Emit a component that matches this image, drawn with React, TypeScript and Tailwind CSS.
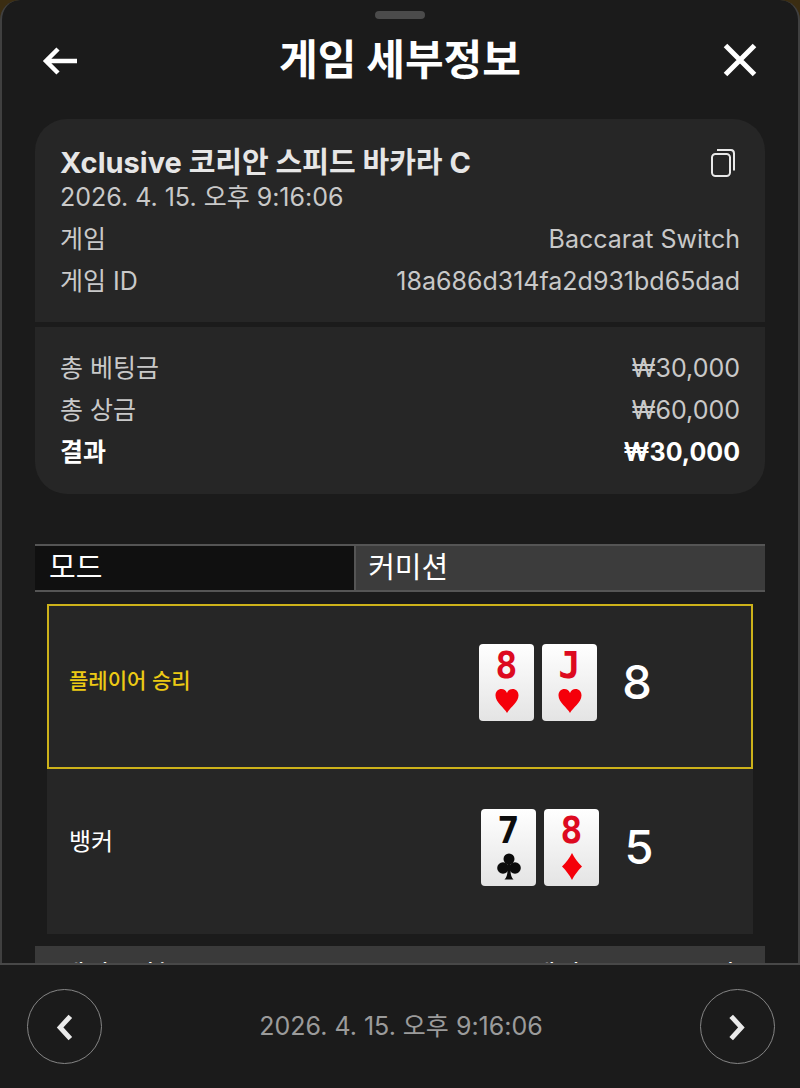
import type { ReactNode } from "react";

const summary = [
  { label: "게임", value: "Baccarat Switch" },
  { label: "게임 ID", value: "18a686d314fa2d931bd65dad" },
];

const totals = [
  { label: "총 베팅금", value: "₩30,000", strong: false },
  { label: "총 상금", value: "₩60,000", strong: false },
  { label: "결과", value: "₩30,000", strong: true },
];

type Suit = "heart" | "club" | "diamond";
type PlayingCard = { rank: string; suit: Suit };

const hands: { name: string; winner: boolean; score: number; cards: PlayingCard[] }[] = [
  {
    name: "플레이어 승리",
    winner: true,
    score: 8,
    cards: [
      { rank: "8", suit: "heart" },
      { rank: "J", suit: "heart" },
    ],
  },
  {
    name: "뱅커",
    winner: false,
    score: 5,
    cards: [
      { rank: "7", suit: "club" },
      { rank: "8", suit: "diamond" },
    ],
  },
];

const playedAt = "2026. 4. 15. 오후 9:16:06";

const suits: Record<Suit, ReactNode> = {
  heart: (
    <path
      d="M12 25C9.500 20 0.500 14.500 0.500 7.500C0.500 3.500 3 1 6.500 1C9 1 11 2.500 12 5C13 2.500 15 1 17.500 1C21 1 23.500 3.500 23.500 7.500C23.500 14.500 14.500 20 12 25Z"
      fill="#f5000a"
    />
  ),
  diamond: <path d="M12 0C14.500 5 18 9.500 22 13.500C18 17.500 14.500 22 12 27C9.500 22 6 17.500 2 13.500C6 9.500 9.500 5 12 0Z" fill="#f5000a" />,
  club: (
    <g fill="#0c0c0c">
      <circle cx="12" cy="6" r="5.500" />
      <circle cx="6" cy="15" r="5.800" />
      <circle cx="18" cy="15" r="5.800" />
      <path d="M10.500 9H13.500V18C13.700 22 14.500 24.500 16.500 26.500H7.500C9.500 24.500 10.300 22 10.500 18Z" />
    </g>
  ),
};

function Card({ rank, suit }: PlayingCard) {
  return (
    <div className="flex h-[77px] w-[55px] flex-col items-center rounded bg-linear-to-b from-white to-[#e4e4e4] pt-1">
      <span
        className={`font-['DejaVu_Sans_Mono',monospace] text-[37px] leading-9 font-bold ${suit === "club" ? "text-[#0c0c0c]" : "text-[#dd0a20]"}`}
      >
        {rank}
      </span>
      <svg viewBox="0 0 24 27" className="mt-1 h-[27px] w-6">
        {suits[suit]}
      </svg>
    </div>
  );
}

function Row({ label, value, strong = false }: { label: string; value: string; strong?: boolean }) {
  return (
    <div className={`flex justify-between gap-4 ${strong ? "font-bold text-white" : "text-[#c9c9c9]"}`}>
      <dt>{label}</dt>
      <dd>{value}</dd>
    </div>
  );
}

export default function App() {
  return (
    <div className="flex h-screen flex-col overflow-hidden bg-[#3b2d12] font-['Inter','Noto_Sans_CJK_KR',sans-serif]">
      <div className="flex min-h-0 flex-1 flex-col rounded-t-[20px] border-x-2 border-[#404040] bg-[#1b1b1b]">
        <header className="px-[33px] pt-[11px]">
          <div className="mx-auto h-2 w-[50px] rounded-full bg-[#4b4b4b]" />
          <div className="mt-[11px] flex h-[60px] items-center justify-between">
            <button type="button" aria-label="뒤로" className="flex size-[50px] items-center justify-center">
              <svg viewBox="0 0 50 50" className="size-full" fill="none" stroke="#fff" strokeWidth="4.500">
                <path d="M42 26H11M23 14L11 26L23 38" />
              </svg>
            </button>
            <h1 className="text-[42px] leading-[60px] font-bold text-white">게임 세부정보</h1>
            <button type="button" aria-label="닫기" className="flex size-[50px] items-center justify-center">
              <svg viewBox="0 0 50 50" className="size-full" fill="none" stroke="#fff" strokeWidth="5">
                <path d="M10.500 10.500L39.500 39.500M39.500 10.500L10.500 39.500" />
              </svg>
            </button>
          </div>
        </header>

        <main className="min-h-0 flex-1 overflow-hidden px-[33px] pt-[29px]">
          <section className="overflow-hidden rounded-[32px] text-[25px] leading-[42px]">
            <div className="bg-[#262626] px-[25px] pt-[26px] pb-5">
              <div className="flex items-center justify-between">
                <h2 className="text-[29px] leading-[36px] font-bold text-[#e6e6e6]">Xclusive 코리안 스피드 바카라 C</h2>
                <button type="button" aria-label="복사" className="flex h-9 w-[34px] items-center justify-center">
                  <svg viewBox="0 0 34 36" className="size-full" fill="none" stroke="#e8e8e8" strokeWidth="2">
                    <rect x="6" y="9" width="18" height="22" rx="3.500" />
                    <path d="M11 5H25C27 5 28 6.500 28 8.500V25.500" />
                  </svg>
                </button>
              </div>
              <p className="leading-8 text-[#c9c9c9]">{playedAt}</p>
              <dl className="pt-[5px]">
                {summary.map((r) => (
                  <Row key={r.label} {...r} />
                ))}
              </dl>
            </div>
            <dl className="mt-[5px] bg-[#262626] px-[25px] pt-5 pb-[21px]">
              {totals.map((r) => (
                <Row key={r.label} {...r} />
              ))}
            </dl>
          </section>

          <section className="mt-[50px]">
            <dl className="flex border-y-2 border-[#555] text-[29px] leading-[44px] text-white">
              <dt className="w-[44%] border-r-2 border-[#555] bg-[#101010] px-[14px]">모드</dt>
              <dd className="flex-1 bg-[#3c3c3c] px-3">커미션</dd>
            </dl>

            <div className="mt-3 px-3">
              {hands.map((h) => (
                <div
                  key={h.name}
                  className={`flex h-[165px] items-center bg-[#262626] pr-[74px] pb-2 ${h.winner ? "border-2 border-[#cdb21a] pl-5" : "pl-[22px]"}`}
                >
                  <span
                    className={`flex-1 ${h.winner ? "pb-1 text-[21px] font-medium text-[#ecca14]" : "pb-3 text-2xl text-white"}`}
                  >
                    {h.name}
                  </span>
                  <div className="flex gap-2">
                    {h.cards.map((c) => (
                      <Card key={c.rank + c.suit} {...c} />
                    ))}
                  </div>
                  <span className="w-[80px] text-center text-[47px] font-medium text-white">{h.score}</span>
                </div>
              ))}
            </div>

            <table className="mt-3 w-full table-fixed bg-[#3a3a3a] text-[27px] text-white">
              <thead>
                <tr className="h-[60px]">
                  <th className="w-1/2 pl-[25px] text-left font-normal">베팅 유형</th>
                  <th className="w-1/4 pr-0.5 text-right font-normal">베팅</th>
                  <th className="pr-1 text-right font-normal">상금</th>
                </tr>
              </thead>
            </table>
          </section>
        </main>
      </div>

      <footer className="flex h-[125px] shrink-0 items-center justify-between border-t-2 border-[#484848] bg-[#1b1b1b] pr-[25px] pl-[27px]">
        <button type="button" aria-label="이전" className="size-[75px] rounded-full border border-[#858585]">
          <svg viewBox="0 0 75 75" className="size-full" fill="none" stroke="#eaeaea" strokeWidth="5">
            <path d="M43.500 27L33 38.500L43.500 50" />
          </svg>
        </button>
        <p className="text-[25px] text-[#9b9b9b]">{playedAt}</p>
        <button type="button" aria-label="다음" className="size-[75px] rounded-full border border-[#858585]">
          <svg viewBox="0 0 75 75" className="size-full" fill="none" stroke="#eaeaea" strokeWidth="5">
            <path d="M31 27L41.500 38.500L31 50" />
          </svg>
        </button>
      </footer>
    </div>
  );
}
